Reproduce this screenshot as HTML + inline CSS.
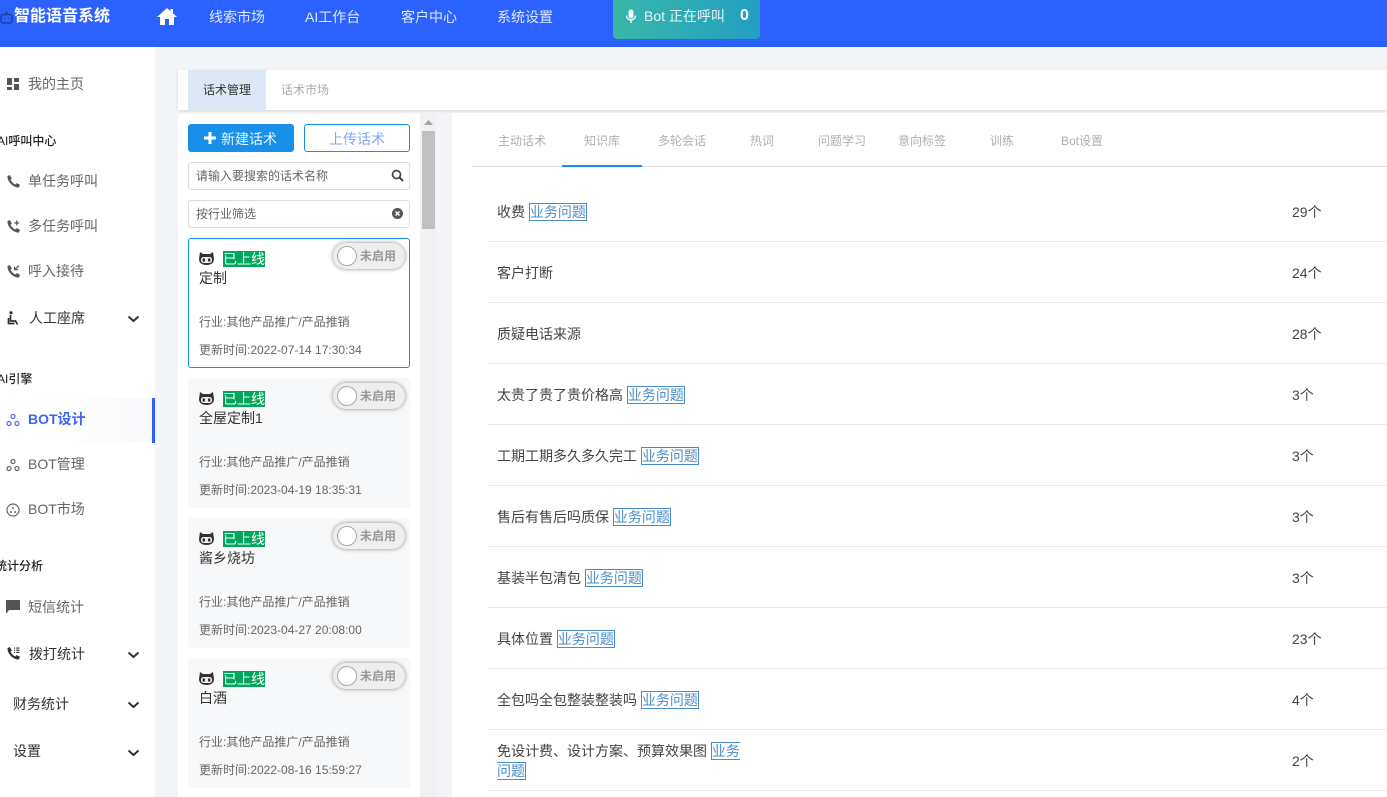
<!DOCTYPE html>
<html lang="zh"><head><meta charset="utf-8"><style>
*{box-sizing:border-box}
html,body{margin:0;width:1387px;height:797px;overflow:hidden;background:#f3f5f8;font-family:"Liberation Sans","Noto Sans CJK SC",sans-serif;font-size:14px;color:#333}
.a{position:absolute;white-space:nowrap}
.t{position:absolute;white-space:nowrap;line-height:20px;height:20px}
.nav{color:#dfe8ff;font-size:14px;top:7px}
.side{color:#666;font-size:14px}
.dark{color:#333;font-size:14px}
.h{color:#222;font-size:12px;font-weight:500}
svg{position:absolute;display:block}
.tab{position:absolute;top:131px;width:80px;text-align:center;color:#b0b0b0;font-size:12px;line-height:20px}
.row{position:absolute;left:487px;right:0;height:61px;border-bottom:1px solid #eaeaea}
.row .q{position:absolute;left:10px;top:50%;transform:translateY(calc(-50% + 1px));width:250px;font-size:14px;color:#444;line-height:20px}
.row .n{position:absolute;left:805px;top:21px;font-size:14px;color:#444;line-height:20px}
.tag{border:1px solid #4a8ccb;color:#4a8ccb;padding:0}
.card{position:absolute;left:188px;width:222px;height:130px;background:#f7f8fa;border-radius:3px}
.card.on{background:#fff;border:1px solid #1890e8}
.card .in{position:absolute;left:0;top:0;width:222px;height:130px}
.card.on .in{left:-1px;top:-1px}
.st{position:absolute;left:35px;top:13px;height:16px;line-height:16px;background:#00a65a;color:#fff;font-size:14px;width:42px;text-align:center;white-space:nowrap}
.name{position:absolute;left:11px;top:30px;font-size:14px;color:#333;line-height:20px}
.l1{position:absolute;left:11px;top:74px;font-size:12px;color:#666;line-height:20px;white-space:nowrap}
.l2{position:absolute;left:11px;top:102px;font-size:12px;color:#666;line-height:20px;white-space:nowrap}
.sw{position:absolute;left:145px;top:5px;width:72px;height:26px;border-radius:13px;background:#eee;box-shadow:0 0 4px rgba(0,0,0,.45)}
.sw i{position:absolute;left:4px;top:3px;width:20px;height:20px;border-radius:50%;background:#fff;border:1px solid #aaa}
.sw b{position:absolute;left:27px;top:3px;font-size:12px;color:#999;line-height:20px;font-weight:700;white-space:nowrap}
</style></head><body>
<div class="a" style="left:0;top:0;width:1387px;height:47px;background:#2b62ff"></div>
<svg style="left:0;top:11px" width="14" height="14" viewBox="0 0 14 14"><rect x="1" y="3.500" width="11" height="8.500" rx="2.500" fill="none" stroke="#1d3f9e" stroke-width="1.500"/><circle cx="6.500" cy="1.500" r="1" fill="#1d3f9e"/><path d="M6.500 2v2M4 7.500h1M8 7.500h1" stroke="#1d3f9e"/></svg>
<div class="t" style="left:14px;top:7px;color:#fff;font-size:16px;font-weight:700">智能语音系统</div>
<svg style="left:157px;top:7px" width="20" height="19" viewBox="0 0 20 19"><path fill="#fff" d="M10 1 0 10h3v8h5v-6h4v6h5v-8h3l-4-3.600V2h-2.500v2.200z"/></svg>
<div class="t nav" style="left:209px">线索市场</div>
<div class="t nav" style="left:305px">AI工作台</div>
<div class="t nav" style="left:401px">客户中心</div>
<div class="t nav" style="left:497px">系统设置</div>
<div class="a" style="left:613px;top:0;width:147px;height:39px;border-radius:0 0 4px 4px;background:linear-gradient(90deg,#38b6a8,#239fc4)"></div>
<svg style="left:625px;top:9px" width="12" height="15" viewBox="0 0 12 15"><rect x="3.500" y="0.500" width="5" height="9" rx="2.500" fill="#f0fbfa"/><path d="M1.500 6.500a4.500 4.500 0 0 0 9 0M6 11v3" fill="none" stroke="#f0fbfa" stroke-width="1.400"/></svg>
<div class="t" style="left:644px;top:6px;color:#e8f8f8;font-size:14px">Bot 正在呼叫</div>
<div class="t" style="left:740px;top:6px;color:#f0fbfb;font-size:16px;font-weight:700">0</div>

<div class="a" style="left:0;top:47px;width:155px;height:750px;background:#fff"></div>
<svg style="left:7px;top:78px" width="12" height="12" viewBox="0 0 12 12"><path fill="#555" d="M0 0h5v7H0zM7 0h5v4H7zM7 6h5v6H7zM0 9h5v3H0z"/></svg>
<div class="t side" style="left:28px;top:74px">我的主页</div>
<div class="t h" style="left:-3px;top:131px">AI呼叫中心</div>
<svg style="left:7px;top:175px" width="13" height="13" viewBox="0 0 24 24"><path fill="#555" d="M5 0 1 2C0 12 12 24 22 23l2-5-6-3-3 2.500C12 16 8 12 6.500 9L9 6.500z"/></svg>
<div class="t side" style="left:28px;top:171px">单任务呼叫</div>
<svg style="left:7px;top:220px" width="13" height="13" viewBox="0 0 24 24"><path fill="#555" d="M5 0 1 2C0 12 12 24 22 23l2-5-6-3-3 2.500C12 16 8 12 6.500 9L9 6.500z"/><path d="M18 1v9M13.500 5.500h9" stroke="#555" stroke-width="2.400"/></svg>
<div class="t side" style="left:28px;top:216px">多任务呼叫</div>
<svg style="left:7px;top:265px" width="13" height="13" viewBox="0 0 24 24"><path fill="#555" d="M5 0 1 2C0 12 12 24 22 23l2-5-6-3-3 2.500C12 16 8 12 6.500 9L9 6.500z"/><path d="M22 1l-7 7M14 3v5.500h6" stroke="#555" stroke-width="2.200" fill="none"/></svg>
<div class="t side" style="left:28px;top:261px">呼入接待</div>
<svg style="left:7px;top:311px" width="13" height="15" viewBox="0 0 13 15"><circle cx="4" cy="1.800" r="1.600" fill="#333"/><path fill="none" stroke="#333" stroke-width="1.700" d="M3.500 4v6h5l2 3.500M1.500 7v5.500h6"/></svg>
<div class="t dark" style="left:29px;top:308px">人工座席</div>
<svg style="left:127px;top:315px" width="13" height="8" viewBox="0 0 13 8"><path d="M1.500 1.500 6.500 6l5-4.500" fill="none" stroke="#333" stroke-width="2"/></svg>
<div class="t h" style="left:-3px;top:369px">AI引擎</div>
<div class="a" style="left:0;top:398px;width:155px;height:45px;background:linear-gradient(90deg,#fff 30%,#f9f9fb)"></div>
<div class="a" style="left:152px;top:398px;width:3px;height:45px;background:#2b62ff"></div>
<svg style="left:6px;top:413px" width="14" height="14" viewBox="0 0 14 14"><g fill="none" stroke="#4f6cf5" stroke-width="1.200"><circle cx="7" cy="3.500" r="2"/><circle cx="3" cy="10.500" r="2"/><circle cx="11" cy="10.500" r="2"/></g></svg>
<div class="t" style="left:28px;top:409px;color:#3d66f5;font-weight:700;font-size:14px">BOT设计</div>
<svg style="left:6px;top:458px" width="14" height="14" viewBox="0 0 14 14"><g fill="none" stroke="#666" stroke-width="1.200"><circle cx="7" cy="3.500" r="2"/><circle cx="3" cy="10.500" r="2"/><circle cx="11" cy="10.500" r="2"/></g></svg>
<div class="t side" style="left:28px;top:454px">BOT管理</div>
<svg style="left:6px;top:503px" width="14" height="14" viewBox="0 0 14 14"><circle cx="7" cy="7" r="6" fill="none" stroke="#666" stroke-width="1.200"/><circle cx="7" cy="5" r="1" fill="#666"/><circle cx="4.800" cy="9" r="1" fill="#666"/><circle cx="9.200" cy="9" r="1" fill="#666"/></svg>
<div class="t side" style="left:28px;top:499px">BOT市场</div>
<div class="t h" style="left:-5px;top:556px">统计分析</div>
<svg style="left:6px;top:600px" width="14" height="14" viewBox="0 0 14 14"><path fill="#555" d="M0 0h14v10H3l-3 4z"/></svg>
<div class="t side" style="left:28px;top:597px">短信统计</div>
<svg style="left:7px;top:647px" width="13" height="13" viewBox="0 0 24 24"><path fill="#333" d="M5 0 1 2C0 12 12 24 22 23l2-5-6-3-3 2.500C12 16 8 12 6.500 9L9 6.500z"/><path d="M13 2h2M13 6h2M13 10h2M17 2h6M17 6h6M17 10h6" stroke="#333" stroke-width="2.200"/></svg>
<div class="t dark" style="left:29px;top:644px">拨打统计</div>
<svg style="left:127px;top:651px" width="13" height="8" viewBox="0 0 13 8"><path d="M1.500 1.500 6.500 6l5-4.500" fill="none" stroke="#333" stroke-width="2"/></svg>
<div class="t dark" style="left:13px;top:694px">财务统计</div>
<svg style="left:127px;top:701px" width="13" height="8" viewBox="0 0 13 8"><path d="M1.500 1.500 6.500 6l5-4.500" fill="none" stroke="#333" stroke-width="2"/></svg>
<div class="t dark" style="left:13px;top:741px">设置</div>
<svg style="left:127px;top:749px" width="13" height="8" viewBox="0 0 13 8"><path d="M1.500 1.500 6.500 6l5-4.500" fill="none" stroke="#333" stroke-width="2"/></svg>

<div class="a" style="left:178px;top:70px;width:1209px;height:40px;background:#fff;box-shadow:0 1px 3px rgba(0,0,0,.14)"></div>
<div class="a" style="left:188px;top:70px;width:78px;height:40px;background:#dce8f5"></div>
<div class="t" style="left:203px;top:80px;font-size:12px;color:#333">话术管理</div>
<div class="t" style="left:281px;top:80px;font-size:12px;color:#aaa">话术市场</div>

<div class="a" style="left:178px;top:114px;width:242px;height:683px;background:#fff"></div>
<div class="a" style="left:420px;top:114px;width:16px;height:683px;background:#f1f1f1"></div>
<div class="a" style="left:422px;top:131px;width:13px;height:98px;background:#c1c1c1"></div>
<svg style="left:424px;top:120px" width="9" height="6"><path d="M0 5 4.500 0 9 5z" fill="#a3a3a3"/></svg>
<div class="a" style="left:452px;top:113px;width:935px;height:684px;background:#fff"></div>

<div class="a" style="left:188px;top:124px;width:106px;height:28px;background:#1890e8;border-radius:3px"></div>
<svg style="left:204px;top:132px" width="12" height="12" viewBox="0 0 12 12"><path d="M6 0v12M0 6h12" stroke="#fff" stroke-width="3"/></svg>
<div class="t" style="left:221px;top:129px;color:#e8f4ff;font-size:14px">新建话术</div>
<div class="a" style="left:304px;top:124px;width:106px;height:28px;background:#fff;border:1px solid #1890e8;border-radius:3px"></div>
<div class="t" style="left:329px;top:129px;color:#7fa8ee;font-size:14px">上传话术</div>
<div class="a" style="left:188px;top:162px;width:222px;height:28px;background:#fff;border:1px solid #ddd;border-radius:3px"></div>
<div class="t" style="left:196px;top:166px;font-size:12px;color:#666">请输入要搜索的话术名称</div>
<svg style="left:391px;top:169px" width="13" height="13" viewBox="0 0 13 13"><circle cx="5.500" cy="5.500" r="4" fill="none" stroke="#444" stroke-width="1.700"/><path d="M8.500 8.500 12 12" stroke="#444" stroke-width="2"/></svg>
<div class="a" style="left:188px;top:200px;width:222px;height:28px;background:#fff;border:1px solid #ddd;border-radius:3px"></div>
<div class="t" style="left:196px;top:204px;font-size:12px;color:#666">按行业筛选</div>
<svg style="left:392px;top:208px" width="11" height="11" viewBox="0 0 11 11"><circle cx="5.500" cy="5.500" r="5.500" fill="#555"/><path d="M3.500 3.500l4 4M7.500 3.500l-4 4" stroke="#fff" stroke-width="1.500"/></svg>

<div class="card on" style="top:238px"><div class="in">
<svg style="left:11px;top:14px" width="15" height="13" viewBox="0 0 15 13"><path fill="#333" d="M1 0l3 2h7l3-2 1 7c0 4-3 6-7.500 6S0 11 0 7z"/><rect x="2" y="5" width="11" height="6" rx="2.500" fill="#eee"/><ellipse cx="4.800" cy="8" rx="1.300" ry="1.800" fill="#333"/><ellipse cx="10.200" cy="8" rx="1.300" ry="1.800" fill="#333"/></svg>
<div class="st">已上线</div><div class="name">定制</div><div class="l1">行业:其他产品推广/产品推销</div><div class="l2">更新时间:2022-07-14 17:30:34</div>
<div class="sw"><i></i><b>未启用</b></div></div></div>
<div class="card" style="top:378px"><div class="in">
<svg style="left:11px;top:14px" width="15" height="13" viewBox="0 0 15 13"><path fill="#333" d="M1 0l3 2h7l3-2 1 7c0 4-3 6-7.500 6S0 11 0 7z"/><rect x="2" y="5" width="11" height="6" rx="2.500" fill="#eee"/><ellipse cx="4.800" cy="8" rx="1.300" ry="1.800" fill="#333"/><ellipse cx="10.200" cy="8" rx="1.300" ry="1.800" fill="#333"/></svg>
<div class="st">已上线</div><div class="name">全屋定制1</div><div class="l1">行业:其他产品推广/产品推销</div><div class="l2">更新时间:2023-04-19 18:35:31</div>
<div class="sw"><i></i><b>未启用</b></div></div></div>
<div class="card" style="top:518px"><div class="in">
<svg style="left:11px;top:14px" width="15" height="13" viewBox="0 0 15 13"><path fill="#333" d="M1 0l3 2h7l3-2 1 7c0 4-3 6-7.500 6S0 11 0 7z"/><rect x="2" y="5" width="11" height="6" rx="2.500" fill="#eee"/><ellipse cx="4.800" cy="8" rx="1.300" ry="1.800" fill="#333"/><ellipse cx="10.200" cy="8" rx="1.300" ry="1.800" fill="#333"/></svg>
<div class="st">已上线</div><div class="name">酱乡烧坊</div><div class="l1">行业:其他产品推广/产品推销</div><div class="l2">更新时间:2023-04-27 20:08:00</div>
<div class="sw"><i></i><b>未启用</b></div></div></div>
<div class="card" style="top:658px"><div class="in">
<svg style="left:11px;top:14px" width="15" height="13" viewBox="0 0 15 13"><path fill="#333" d="M1 0l3 2h7l3-2 1 7c0 4-3 6-7.500 6S0 11 0 7z"/><rect x="2" y="5" width="11" height="6" rx="2.500" fill="#eee"/><ellipse cx="4.800" cy="8" rx="1.300" ry="1.800" fill="#333"/><ellipse cx="10.200" cy="8" rx="1.300" ry="1.800" fill="#333"/></svg>
<div class="st">已上线</div><div class="name">白酒</div><div class="l1">行业:其他产品推广/产品推销</div><div class="l2">更新时间:2022-08-16 15:59:27</div>
<div class="sw"><i></i><b>未启用</b></div></div></div>

<div class="tab" style="left:482px">主动话术</div>
<div class="tab" style="left:562px">知识库</div>
<div class="tab" style="left:642px">多轮会话</div>
<div class="tab" style="left:722px">热词</div>
<div class="tab" style="left:802px">问题学习</div>
<div class="tab" style="left:882px">意向标签</div>
<div class="tab" style="left:962px">训练</div>
<div class="tab" style="left:1042px">Bot设置</div>
<div class="a" style="left:472px;top:166px;width:915px;height:1px;background:#d9d9d9"></div>
<div class="a" style="left:562px;top:165px;width:80px;height:2px;background:#1890e8"></div>

<div class="row" style="top:181px"><div class="q">收费 <span class="tag">业务问题</span></div><div class="n">29个</div></div>
<div class="row" style="top:242px"><div class="q">客户打断</div><div class="n">24个</div></div>
<div class="row" style="top:303px"><div class="q">质疑电话来源</div><div class="n">28个</div></div>
<div class="row" style="top:364px"><div class="q">太贵了贵了贵价格高 <span class="tag">业务问题</span></div><div class="n">3个</div></div>
<div class="row" style="top:425px"><div class="q">工期工期多久多久完工 <span class="tag">业务问题</span></div><div class="n">3个</div></div>
<div class="row" style="top:486px"><div class="q">售后有售后吗质保 <span class="tag">业务问题</span></div><div class="n">3个</div></div>
<div class="row" style="top:547px"><div class="q">基装半包清包 <span class="tag">业务问题</span></div><div class="n">3个</div></div>
<div class="row" style="top:608px"><div class="q">具体位置 <span class="tag">业务问题</span></div><div class="n">23个</div></div>
<div class="row" style="top:669px"><div class="q">全包吗全包整装整装吗 <span class="tag">业务问题</span></div><div class="n">4个</div></div>
<div class="row" style="top:730px"><div class="q">免设计费、设计方案、预算效果图 <span class="tag">业务问题</span></div><div class="n">2个</div></div>
</body></html>
